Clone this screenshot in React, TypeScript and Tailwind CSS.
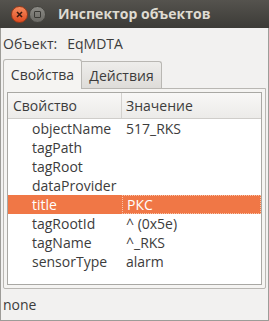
import React from 'react';

const rows = [
  { name: 'objectName', value: '517_RKS' },
  { name: 'tagPath', value: '' },
  { name: 'tagRoot', value: '' },
  { name: 'dataProvider', value: '' },
  { name: 'title', value: 'РКС', selected: true },
  { name: 'tagRootId', value: '^ (0x5e)' },
  { name: 'tagName', value: '^_RKS' },
  { name: 'sensorType', value: 'alarm' },
];

const App: React.FC = () => {
  return (
    <div
      className="w-[269px] h-[321px] flex flex-col bg-[#f2f1f0] text-[#3c3c3c] text-[14px] overflow-hidden"
      style={{ fontFamily: '"Open Sans", "DejaVu Sans", sans-serif' }}
    >
      {/* Title bar */}
      <div className="h-[28px] shrink-0 flex items-center bg-gradient-to-b from-[#55534e] to-[#3c3b37] pl-[11px]">
        <div className="w-[17px] h-[17px] rounded-full bg-gradient-to-b from-[#f58a5c] to-[#df4a1f] border border-[#9a3a1a] flex items-center justify-center">
          <svg width="7" height="7" viewBox="0 0 7 7">
            <path d="M1 1 L6 6 M6 1 L1 6" stroke="#3a1a10" strokeWidth="1.6" />
          </svg>
        </div>
        <div className="ml-[1px] w-[17px] h-[17px] rounded-full bg-gradient-to-b from-[#8c8b86] to-[#6a6964] border border-[#45443f] flex items-center justify-center">
          <div className="w-[7px] h-[7px] border border-[#3a3935] rounded-[1px]" />
        </div>
        <div className="ml-[12px] text-[14px] font-bold text-[#dfdbd2] leading-none">Инспектор объектов</div>
      </div>

      {/* Body */}
      <div className="flex-1 flex flex-col border-x border-b border-[#9d9c98]">
        <div className="h-[30px] flex items-center pl-[2px]">
          <span>Объект:</span>
          <span className="ml-[10px]">EqMDTA</span>
        </div>

        {/* Tabs */}
        <div className="flex pl-[2px] h-[30px] items-end">
          <div className="relative z-10 h-[30px] w-[79px] -mb-px bg-[#f5f4f2] border border-[#b9b7b3] border-b-0 rounded-t-[3px] flex items-center justify-center">
            Свойства
          </div>
          <div className="h-[27px] w-[80px] bg-gradient-to-b from-[#eeedeb] to-[#dedcd9] border border-[#b9b7b3] border-l-0 border-b-0 rounded-tr-[3px] flex items-center justify-center">
            Действия
          </div>
        </div>

        {/* Pane */}
        <div className="mx-[2px] h-[201px] border border-[#b9b7b3] rounded-b-[2px] bg-[#f5f4f2] p-[3px]">
          <div className="h-full border border-[#a9a8a4] bg-white flex flex-col">
            <div className="h-[26px] flex border-b border-[#cfcdca] bg-gradient-to-b from-[#f8f7f6] to-[#ecebe9]">
              <div className="w-[114px] border-r border-[#d3d1ce] flex items-center pl-[5px]">Свойство</div>
              <div className="flex-1 flex items-center pl-[4px]">Значение</div>
            </div>
            {rows.map((r) => (
              <div
                key={r.name}
                className={`h-[19px] flex items-center ${r.selected ? 'bg-[#f07746] text-white' : ''}`}
              >
                <div className="w-[114px] pl-[24px] leading-none">{r.name}</div>
                <div
                  className={`flex-1 h-full flex items-center pl-[4px] leading-none ${
                    r.selected ? 'border border-dotted border-[#f8c2a8]' : ''
                  }`}
                >
                  {r.value}
                </div>
              </div>
            ))}
          </div>
        </div>

        <div className="flex-1 flex items-center pl-[2px]">none</div>
      </div>
    </div>
  );
};

export default App;
